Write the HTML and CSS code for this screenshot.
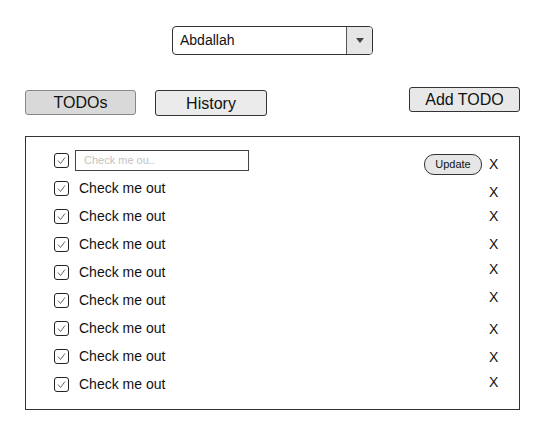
FILE: index.html
```html
<!DOCTYPE html>
<html>
<head>
<meta charset="utf-8">
<link rel="stylesheet" href="styles.css">
</head>
<body>
<div class="page">
  <div class="header">
    <div class="select">
      <span class="select-value">Abdallah</span>
      <span class="select-arrow"><span class="tri"></span></span>
    </div>
  </div>
  <div class="toolbar">
    <div class="tabs">
      <button class="btn tab active">TODOs</button>
      <button class="btn tab">History</button>
    </div>
    <button class="btn add">Add TODO</button>
  </div>
  <div class="panel">
    <div class="row">
      <span class="check"><svg viewBox="0 0 13 13" width="13" height="13"><path d="M3 6.5 L5.5 9.5 L10 3.5" fill="none" stroke="#666" stroke-width="1"/></svg></span>
      <span class="edit"><span class="ph">Check me ou..</span></span>
      <span class="spacer"></span>
      <button class="update">Update</button>
      <span class="del d4">X</span>
    </div>
    <div class="row">
      <span class="check"><svg viewBox="0 0 13 13" width="13" height="13"><path d="M3 6.5 L5.5 9.5 L10 3.5" fill="none" stroke="#666" stroke-width="1"/></svg></span>
      <span class="label">Check me out</span><span class="spacer"></span><span class="del d4">X</span>
    </div>
    <div class="row">
      <span class="check"><svg viewBox="0 0 13 13" width="13" height="13"><path d="M3 6.5 L5.5 9.5 L10 3.5" fill="none" stroke="#666" stroke-width="1"/></svg></span>
      <span class="label">Check me out</span><span class="spacer"></span><span class="del">X</span>
    </div>
    <div class="row">
      <span class="check"><svg viewBox="0 0 13 13" width="13" height="13"><path d="M3 6.5 L5.5 9.5 L10 3.5" fill="none" stroke="#666" stroke-width="1"/></svg></span>
      <span class="label">Check me out</span><span class="spacer"></span><span class="del">X</span>
    </div>
    <div class="row">
      <span class="check"><svg viewBox="0 0 13 13" width="13" height="13"><path d="M3 6.5 L5.5 9.5 L10 3.5" fill="none" stroke="#666" stroke-width="1"/></svg></span>
      <span class="label">Check me out</span><span class="spacer"></span><span class="del u3">X</span>
    </div>
    <div class="row">
      <span class="check"><svg viewBox="0 0 13 13" width="13" height="13"><path d="M3 6.5 L5.5 9.5 L10 3.5" fill="none" stroke="#666" stroke-width="1"/></svg></span>
      <span class="label">Check me out</span><span class="spacer"></span><span class="del u3">X</span>
    </div>
    <div class="row">
      <span class="check"><svg viewBox="0 0 13 13" width="13" height="13"><path d="M3 6.5 L5.5 9.5 L10 3.5" fill="none" stroke="#666" stroke-width="1"/></svg></span>
      <span class="label">Check me out</span><span class="spacer"></span><span class="del d1">X</span>
    </div>
    <div class="row">
      <span class="check"><svg viewBox="0 0 13 13" width="13" height="13"><path d="M3 6.5 L5.5 9.5 L10 3.5" fill="none" stroke="#666" stroke-width="1"/></svg></span>
      <span class="label">Check me out</span><span class="spacer"></span><span class="del d1">X</span>
    </div>
    <div class="row">
      <span class="check"><svg viewBox="0 0 13 13" width="13" height="13"><path d="M3 6.5 L5.5 9.5 L10 3.5" fill="none" stroke="#666" stroke-width="1"/></svg></span>
      <span class="label">Check me out</span><span class="spacer"></span><span class="del u2">X</span>
    </div>
  </div>
</div>
</body>
</html>
```
FILE: styles.css
```css
* { box-sizing: border-box; }
html, body { margin: 0; padding: 0; background: #fff; }
body { font-family: "Liberation Sans", Arial, sans-serif; color: #111; }
.page { width: 547px; height: 445px; padding-top: 26px; }

.header { display: flex; padding-left: 172px; }
.select {
  width: 201px; height: 29px;
  border: 1px solid #333; border-radius: 4px;
  display: flex; align-items: stretch; overflow: hidden;
}
.select-value { flex: 1; font-size: 14px; line-height: 27px; padding-left: 7px; }
.select-arrow {
  width: 26px; background: #e6e6e6; border-left: 1px solid #555;
  display: flex; align-items: center; justify-content: center;
}
.tri { width: 0; height: 0; border-left: 4px solid transparent; border-right: 4px solid transparent; border-top: 5px solid #444; }

.toolbar {
  display: flex; justify-content: space-between; align-items: flex-start;
  padding: 0 27px 0 25px; margin-top: 32px; height: 49px;
}
.tabs { display: flex; gap: 19px; padding-top: 3px; }
.btn {
  font-family: "Liberation Sans", Arial, sans-serif; font-size: 16px; color: #111;
  border: 1px solid #333; border-radius: 3px; background: #ebebeb;
  height: 25px; padding: 0; line-height: 23px;
}
.tab { width: 111px; }
.tab + .tab { width: 112px; height: 26px; }
.tab.active { background: #d9d9d9; border-color: #888; }
.add { width: 111px; background: #e8e8e8; }

.panel {
  margin-left: 25px; width: 495px; height: 274px;
  border: 1px solid #333;
  padding: 9px 19px 0 28px;
  display: flex; flex-direction: column;
}
.row { display: flex; align-items: center; height: 28px; }
.check {
  width: 15px; height: 15px; border: 1px solid #222; border-radius: 3px;
  display: flex; flex-shrink: 0;
}
.label { font-size: 14px; margin-left: 10px; }
.edit {
  margin-left: 6px; width: 174px; height: 21px; border: 1px solid #444;
  display: flex; align-items: center; padding-left: 8px;
}
.ph { font-size: 11px; color: #c2c2c2; }
.spacer { flex: 1; }
.update {
  font-family: "Liberation Sans", Arial, sans-serif; font-size: 11px; color: #111;
  width: 58px; height: 21px; padding: 0; line-height: 19px;
  border: 1px solid #333; border-radius: 10px; background: #e6e6e6;
  margin-right: 7px; margin-top: 8px;
}
.del { font-size: 14px; width: 11px; }
.d4 { margin-top: 8px; }
.d1 { margin-top: 2px; }
.u3 { margin-bottom: 6px; }
.u2 { margin-bottom: 4px; }
```
